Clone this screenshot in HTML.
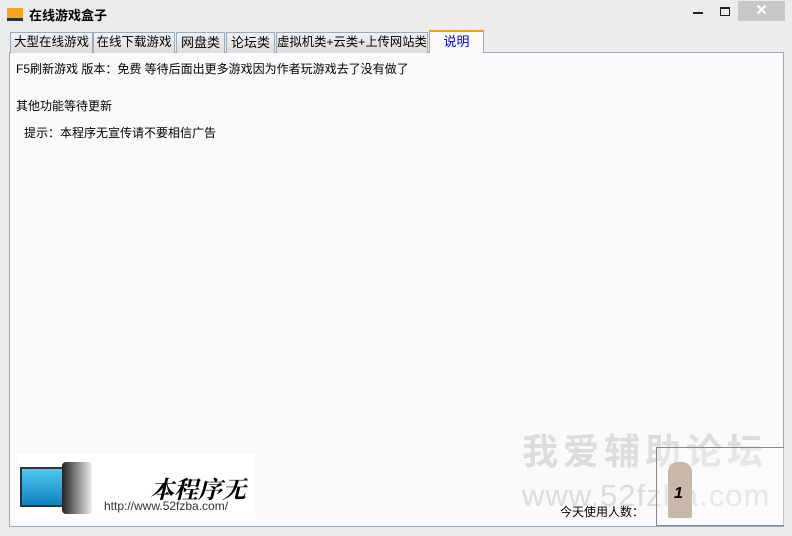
<!DOCTYPE html>
<html><head><meta charset="utf-8"><style>
*{margin:0;padding:0;box-sizing:border-box}
body{width:792px;height:536px;background:#ececec;font-family:"Liberation Sans","Noto Sans CJK SC",sans-serif;font-size:12px;position:relative;overflow:hidden;color:#000}
.abs{position:absolute;white-space:nowrap}
.tab{position:absolute;top:32px;height:21px;border:1px solid #9aaab8;border-bottom:none;background:linear-gradient(#f2f2f2,#dcdcdc);font-size:13px;line-height:19px;text-align:center;white-space:nowrap;overflow:hidden}
.sel{top:30px;height:23px;background:#fafafd;border-top:2px solid #f0a020;color:#0000d0;z-index:2}
</style></head><body>
<div class="abs" style="left:7px;top:8px;width:16px;height:13px;background:#f5a623;border-bottom:3px solid #333"></div>
<div class="abs" style="left:29px;top:5px;font-size:13px;font-weight:bold">在线游戏盒子</div>
<div class="abs" style="left:693px;top:12px;width:10px;height:2px;background:#222"></div>
<div class="abs" style="left:720px;top:7px;width:10px;height:9px;border:1px solid #222;border-top-width:2px"></div>
<div class="abs" style="left:738px;top:1px;width:47px;height:20px;background:#c7c7c7;color:#fff;text-align:center;font-size:15px;line-height:20px;font-weight:bold">✕</div>
<div class="abs" style="left:9px;top:52px;width:775px;height:475px;background:#fafafd;border:1px solid #9aaab8"></div>
<div class="tab" style="left:10px;width:83px;font-size:12.5px">大型在线游戏</div>
<div class="tab" style="left:93px;width:82px;font-size:12.5px">在线下载游戏</div>
<div class="tab" style="left:176px;width:49px">网盘类</div>
<div class="tab" style="left:226px;width:49px">论坛类</div>
<div class="tab" style="left:276px;width:152px;font-size:12.3px">虚拟机类+云类+上传网站类</div>
<div class="tab sel" style="left:429px;width:55px">说明</div>
<div class="abs" style="left:16px;top:60px">F5刷新游戏 版本：免费 等待后面出更多游戏因为作者玩游戏去了没有做了</div>
<div class="abs" style="left:16px;top:97px">其他功能等待更新</div>
<div class="abs" style="left:24px;top:124px">提示：本程序无宣传请不要相信广告</div>
<div class="abs" style="left:522px;top:423px;font-size:36px;font-weight:bold;color:#dcdcdc;letter-spacing:5px">我爱辅助论坛</div>
<div class="abs" style="left:522px;top:478px;font-size:31px;color:#dcdcdc;letter-spacing:1px">www.52fzba.com</div>
<div class="abs" style="left:656px;top:447px;width:128px;height:79px;border:1px solid #888;border-right:none;background:rgba(255,255,255,.3)"></div>
<div class="abs" style="left:668px;top:462px;width:24px;height:56px;background:#c8b8a8;border-radius:10px 10px 2px 2px"></div>
<div class="abs" style="left:674px;top:485px;font-size:16px;font-style:italic;font-weight:bold">1</div>
<div class="abs" style="left:560px;top:503px;font-size:12px">今天使用人数：</div>
<div class="abs" style="left:17px;top:454px;width:238px;height:63px;background:#fff"></div>
<div class="abs" style="left:20px;top:467px;width:48px;height:40px;background:linear-gradient(#50c8f0,#1080c0);border:2px solid #333"></div>
<div class="abs" style="left:62px;top:462px;width:30px;height:52px;background:linear-gradient(90deg,#222,#eee);border-radius:4px"></div>
<div class="abs" style="left:150px;top:470px;font-family:'Noto Serif CJK SC',serif;font-size:24px;font-weight:bold;font-style:italic">本程序无</div>
<div class="abs" style="left:104px;top:499px;font-size:12px;color:#333">http://www.52fzba.com/</div>
</body></html>
